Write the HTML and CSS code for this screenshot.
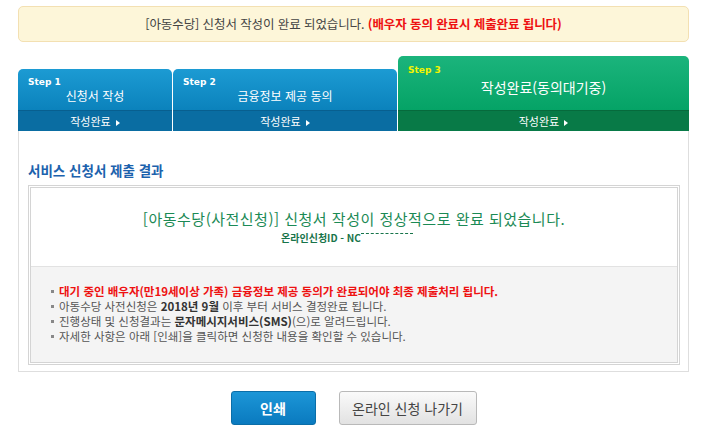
FILE: index.html
```html
<!DOCTYPE html>
<html lang="ko">
<head>
    <meta charset="UTF-8">
    <meta name="viewport" content="width=device-width, initial-scale=1.0">
    <title>아동수당 신청서 제출 결과</title>
    <link rel="stylesheet" href="styles.css">
</head>
<body>
    <div class="wrap">
        <!-- Notice -->
        <div class="notice">
            [아동수당] 신청서 작성이 완료 되었습니다. <strong>(배우자 동의 완료시 제출완료 됩니다)</strong>
        </div>

        <!-- Steps -->
        <div class="steps">
            <div class="step step-1">
                <div class="step-head">
                    <span class="step-label">Step 1</span>
                    <span class="step-title">신청서 작성</span>
                </div>
                <div class="step-band">작성완료</div>
            </div>
            <div class="step step-2">
                <div class="step-head">
                    <span class="step-label">Step 2</span>
                    <span class="step-title">금융정보 제공 동의</span>
                </div>
                <div class="step-band">작성완료</div>
            </div>
            <div class="step step-3 active">
                <div class="step-head">
                    <span class="step-label">Step 3</span>
                    <span class="step-title">작성완료(동의대기중)</span>
                </div>
                <div class="step-band">작성완료</div>
            </div>
        </div>

        <!-- Result -->
        <div class="container">
            <h2>서비스 신청서 제출 결과</h2>
            <div class="result-box">
                <div class="result-main">
                    <p class="result-title">[아동수당(사전신청)] 신청서 작성이 정상적으로 완료 되었습니다.</p>
                    <p class="result-id">온라인신청ID - NC<span class="masked"></span></p>
                </div>
                <ul class="result-info">
                    <li class="warn">대기 중인 배우자(만19세이상 가족) 금융정보 제공 동의가 완료되어야 최종 제출처리 됩니다.</li>
                    <li>아동수당 사전신청은 <b>2018년 9월</b> 이후 부터 서비스 결정완료 됩니다.</li>
                    <li>진행상태 및 신청결과는 <b>문자메시지서비스(SMS)</b>(으)로 알려드립니다.</li>
                    <li>자세한 사항은 아래 [인쇄]을 클릭하면 신청한 내용을 확인할 수 있습니다.</li>
                </ul>
            </div>
        </div>

        <!-- Buttons -->
        <div class="buttons">
            <a href="#" class="button button-blue">인쇄</a>
            <a href="#" class="button button-gray">온라인 신청 나가기</a>
        </div>
    </div>
</body>
</html>
```

FILE: styles.css
```css
/* Global Styles */
body, html {
    margin: 0;
    padding: 0;
    font-family: "Noto Sans CJK KR", "Noto Sans", sans-serif;
    background-color: #fff;
    color: #555;
}

.wrap {
    padding: 6px 12px 0 18px;
}

/* Notice */
.notice {
    height: 34px;
    line-height: 34px;
    border: 1px solid #f3e0b2;
    border-radius: 5px;
    background: #fdf6d9;
    text-align: center;
    font-size: 12.5px;
    color: #444;
    letter-spacing: -0.1px;
}

.notice strong {
    color: #ee1111;
}

/* Steps */
.steps {
    display: flex;
    align-items: flex-end;
    gap: 1px;
    margin-top: 14px;
}

.step {
    color: white;
    border-radius: 5px 5px 0 0;
    overflow: hidden;
}

.step-1 {
    width: 154px;
}

.step-2 {
    width: 224px;
}

.step-3 {
    width: 291px;
}

.step-head {
    height: 34px;
    padding: 7px 10px 0;
    background: linear-gradient(#1c9bd3, #0b82bc);
}

.step-label {
    display: block;
    height: 12px;
    line-height: 12px;
    font-family: "DejaVu Sans", sans-serif;
    font-size: 9px;
    font-weight: bold;
}

.step-title {
    display: block;
    line-height: 16px;
    text-align: center;
    font-size: 12px;
}

.step-band {
    height: 20px;
    line-height: 20px;
    border-top: 1px solid #085f8f;
    background: #0a6da2;
    text-align: center;
    font-size: 11px;
}

.step-band::after {
    content: "";
    display: inline-block;
    margin-left: 5px;
    border-left: 4px solid white;
    border-top: 3px solid transparent;
    border-bottom: 3px solid transparent;
}

.step.active .step-head {
    height: 46px;
    padding-top: 8px;
    background: linear-gradient(#1bb47c, #05a366);
}

.step.active .step-label {
    color: #f4f400;
}

.step.active .step-title {
    margin-top: 3px;
    font-size: 14px;
}

.step.active .step-band {
    border-top-color: #066a3c;
    background: #087a47;
}

/* Result Section */
.container {
    padding: 30px 8px 6px 9px;
    border: 1px solid #dedede;
    border-top: none;
}

.container h2 {
    margin: 0 0 6px;
    font-size: 13.5px;
    line-height: 18px;
    font-weight: bold;
    color: #1c62ad;
}

.result-box {
    border: 3px double #d4d4d4;
}

.result-main {
    height: 77px;
    padding-top: 1px;
    text-align: center;
    border-bottom: 1px solid #e2e2e2;
}

.result-title {
    margin: 20px 0 0;
    font-size: 15px;
    line-height: 20px;
    letter-spacing: 0.5px;
    color: #1b8a55;
}

.result-id {
    margin: 2px 0 0;
    font-size: 10px;
    line-height: 14px;
    font-weight: bold;
    color: #17744a;
}

.result-id .masked {
    display: inline-block;
    width: 52px;
    height: 8px;
    margin-right: 14px;
    border-top: 1px dashed #17744a;
}

.result-info {
    list-style: none;
    margin: 0;
    padding: 17px 19px 18px;
    background: #f4f4f4;
    font-size: 11.5px;
    line-height: 15px;
    color: #555;
}

.result-info li::before {
    content: "";
    display: inline-block;
    width: 3px;
    height: 3px;
    margin: 0 5px 3px 1px;
    background: #888;
}

.result-info b {
    color: #333;
}

.result-info .warn {
    font-weight: bold;
    color: #ee1111;
}

/* Buttons */
.buttons {
    display: flex;
    justify-content: center;
    gap: 23px;
    margin-top: 19px;
}

.button {
    display: inline-block;
    height: 32px;
    line-height: 32px;
    border-radius: 3px;
    text-align: center;
    text-decoration: none;
    font-size: 14px;
}

.button-blue {
    width: 83px;
    border: 1px solid #0b6ea8;
    background: linear-gradient(#1c96d7, #0a7abf);
    color: white;
    font-weight: bold;
}

.button-gray {
    width: 136px;
    border: 1px solid #b9b9b9;
    background: linear-gradient(#fafafa, #e2e2e2);
    color: #444;
}
```
